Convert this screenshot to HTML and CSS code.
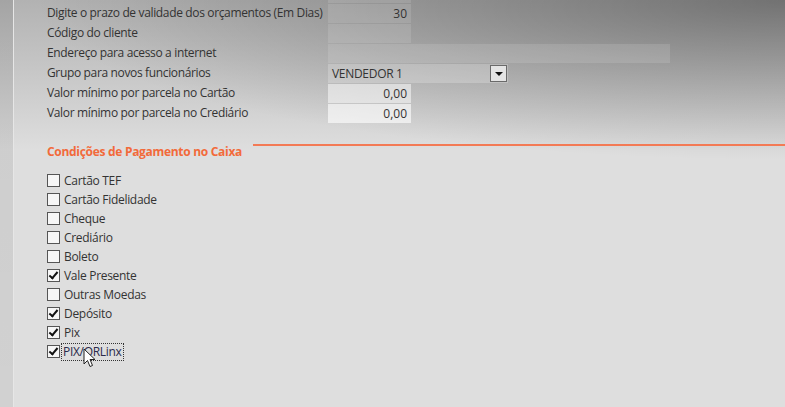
FILE: index.html
```html
<!DOCTYPE html>
<html lang="pt-BR">
<head>
  <meta charset="UTF-8">
  <title>Configurações</title>
  <link rel="stylesheet" href="styles.css">
</head>
<body>
  <div class="window">
    <div class="rail"></div>

    <div class="content">
      <!-- Parametros gerais -->
      <div class="form-rows">
        <div class="row">
          <span class="label">Digite o prazo padrão para pagamento (Em Dias)</span>
          <span class="field num"></span>
        </div>
        <div class="row">
          <span class="label">Digite o prazo de validade dos orçamentos (Em Dias)</span>
          <span class="field num">30</span>
        </div>
        <div class="row">
          <span class="label">Código do cliente</span>
          <span class="field num"></span>
        </div>
        <div class="row">
          <span class="label">Endereço para acesso a internet</span>
          <span class="field wide"></span>
        </div>
        <div class="row">
          <span class="label">Grupo para novos funcionários</span>
          <span class="field combo">
            <span class="combo-text">VENDEDOR 1</span>
            <span class="combo-btn"><span class="arrow"></span></span>
          </span>
        </div>
        <div class="row">
          <span class="label">Valor mínimo por parcela no Cartão</span>
          <span class="field num light">0,00</span>
        </div>
        <div class="row">
          <span class="label">Valor mínimo por parcela no Crediário</span>
          <span class="field num lighter">0,00</span>
        </div>
      </div>

      <!-- Condicoes de pagamento -->
      <div class="section-head">
        <h2>Condições de Pagamento no Caixa</h2>
        <span class="section-line"></span>
      </div>

      <ul class="checks">
        <li><span class="box"></span>Cartão TEF</li>
        <li><span class="box"></span>Cartão Fidelidade</li>
        <li><span class="box"></span>Cheque</li>
        <li><span class="box"></span>Crediário</li>
        <li><span class="box"></span>Boleto</li>
        <li><span class="box checked"></span>Vale Presente</li>
        <li><span class="box"></span>Outras Moedas</li>
        <li><span class="box checked"></span>Depósito</li>
        <li><span class="box checked"></span>Pix</li>
        <li class="focused">
          <span class="box checked"></span><span class="focus-text">PIX/QRLinx</span>
          <svg class="cursor" width="13" height="20" viewBox="0 0 13 20">
            <path d="M1 1 L1 16 L4.5 12.5 L7 18.5 L9.5 17.5 L7 11.5 L12 11.5 Z" fill="#fff" stroke="#222" stroke-width="1" stroke-linejoin="round"/>
          </svg>
        </li>
      </ul>
    </div>
  </div>
</body>
</html>
```

FILE: styles.css
```css
body {
  margin: 0;
  padding: 0;
  font-family: "Open Sans", "Noto Sans", sans-serif;
  font-size: 12px;
  color: #333;
  overflow: hidden;
}

.window {
  display: flex;
  height: 407px;
  background:
    radial-gradient(ellipse 750px 160px at 100% 0, rgba(0,0,0,0.36), rgba(0,0,0,0) 100%),
    linear-gradient(to bottom, #b2b2b2 0, #d2d2d2 110px, #dedede 150px, #dedede 100%);
}

.rail {
  width: 13px;
  flex-shrink: 0;
  border-right: 1px solid #e6e6e6;
  background: linear-gradient(to bottom, rgba(0,0,0,0.08), rgba(0,0,0,0.06));
}

.content {
  flex: 1;
  padding-left: 33px;
  position: relative;
}

/* Form rows */
.form-rows {
  margin-top: -17px;
}

.row {
  display: flex;
  align-items: stretch;
  height: 20px;
}

.label {
  width: 281px;
  line-height: 20px;
  white-space: nowrap;
  letter-spacing: -0.35px;
}

.field {
  box-sizing: border-box;
  height: 19px;
  margin-top: 1px;
  line-height: 19px;
  background-color: rgba(255,255,255,0.12);
  padding: 0 4px;
}

.field.num {
  width: 83px;
  text-align: right;
}

.field.wide {
  width: 342px;
}

.field.light {
  background-color: rgba(255,255,255,0.5);
}

.field.lighter {
  background-color: rgba(255,255,255,0.62);
}

.field.combo {
  width: 180px;
  display: flex;
  justify-content: space-between;
  align-items: center;
  padding: 0 1px 0 4px;
  background-color: rgba(255,255,255,0.22);
}

.combo-text {
  letter-spacing: -0.3px;
}

.combo-btn {
  box-sizing: border-box;
  width: 17px;
  height: 17px;
  border: 1px solid #6a6a6a;
  background-color: #e4e4e4;
  display: flex;
  justify-content: center;
  align-items: center;
}

.arrow {
  width: 0;
  height: 0;
  border-left: 4px solid transparent;
  border-right: 4px solid transparent;
  border-top: 4px solid #111;
}

/* Section header */
.section-head {
  display: flex;
  align-items: flex-start;
  margin-top: 20px;
  height: 22px;
}

.section-head h2 {
  margin: 0;
  font-size: 12px;
  font-weight: bold;
  color: #f26a3a;
  letter-spacing: -0.3px;
  white-space: nowrap;
}

.section-line {
  flex: 1;
  height: 2px;
  margin-left: 11px;
  margin-top: 1px;
  background-color: #f37a55;
}

/* Checkbox list */
.checks {
  list-style-type: none;
  margin: 6px 0 0 0;
  padding: 0;
}

.checks li {
  display: flex;
  align-items: center;
  height: 19px;
  letter-spacing: -0.3px;
  position: relative;
}

.box {
  box-sizing: border-box;
  width: 13px;
  height: 13px;
  margin-right: 4px;
  border: 1px solid #555;
  background-color: #f6f6f6;
  position: relative;
  flex-shrink: 0;
}

.box.checked::after {
  content: "";
  position: absolute;
  left: 3px;
  top: 0;
  width: 3px;
  height: 7px;
  border-right: 2.5px solid #111;
  border-bottom: 2.5px solid #111;
  transform: rotate(40deg);
}

.focus-text {
  border: 1px dotted #333;
  padding: 0 1px;
  margin-left: -3px;
  line-height: 16px;
  color: #2a2a4a;
}

.cursor {
  position: absolute;
  left: 36px;
  top: 6px;
}
```
